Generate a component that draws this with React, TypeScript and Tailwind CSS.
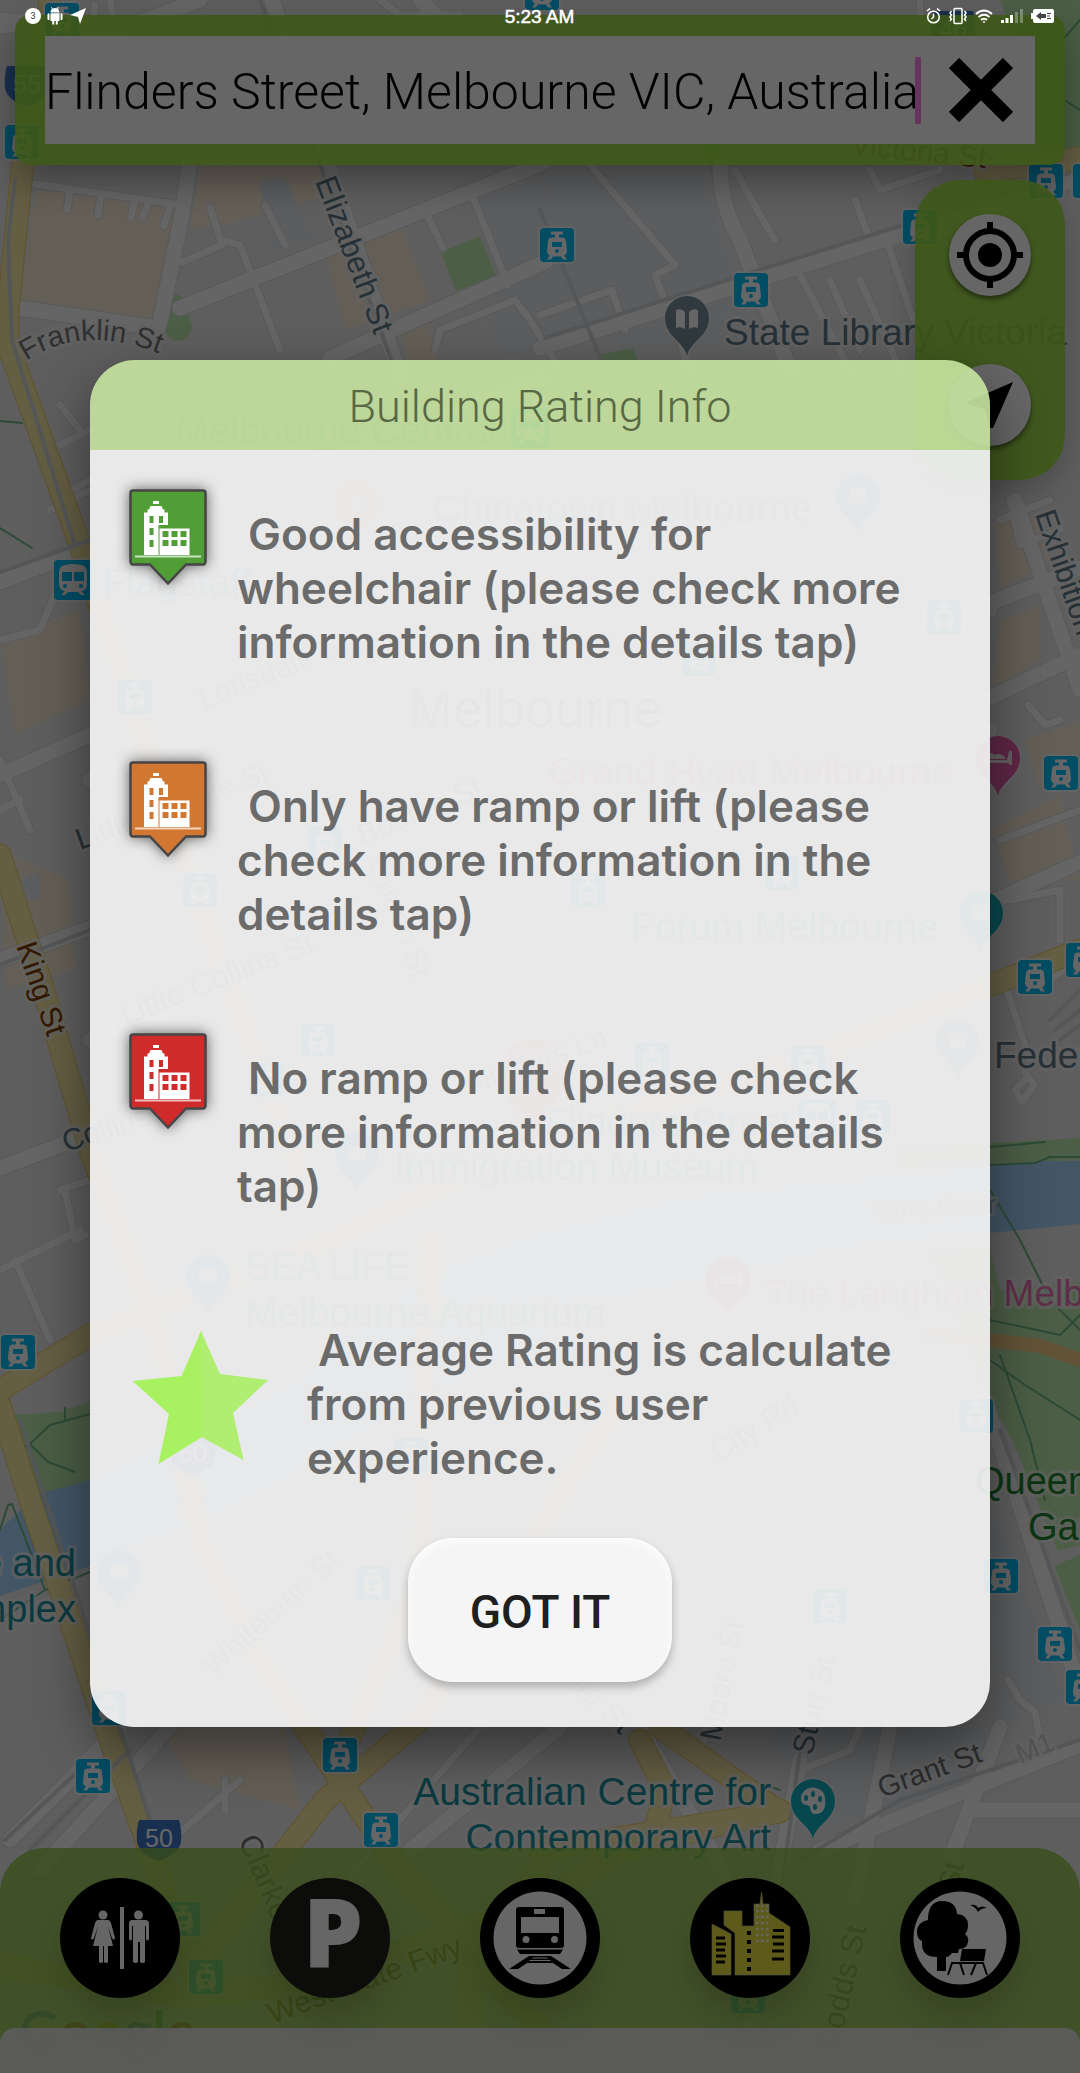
import React from "react";

type Point = [number, number];

const parks = [
  "M1000 0H1080V158L1045 150L1020 120L1015 40Z",
  "M441 252L480 236L496 277L456 291Z",
  "M169 300Q176 290 183 298L192 327Q188 341 177 341Q166 339 165 326Z",
  "M702 140H720L716 187Z",
  "M10 1415L60 1412L90 1401V1482L38 1494L22 1440Z",
  "M900 1148L1080 1138V1160L900 1168Z",
  "M930 1250L990 1248L1000 1290L1080 1282V1545L1058 1551L1012 1440L990 1400L950 1300Z",
  "M1054 1566L1080 1555V1630Z",
  "M600 355L632 348L640 366H600Z",
];

const warmBlocks = [
  "M36 190L182 208L166 290L155 320L20 302Z",
  "M200 165L300 150L345 190L225 225L190 230Z",
  "M325 250L400 222L430 300L345 330Z",
  "M400 330L425 310L440 370H410Z",
  "M0 640L80 610L90 700L15 735Z",
  "M0 850L70 880L75 970L5 990Z",
  "M995 520L1035 515L1050 560L1000 590Z",
  "M1000 620L1040 605L1040 660L992 690Z",
  "M1025 740L1080 720V770L1040 790Z",
  "M992 830L1060 795L1080 880L1010 880Z",
  "M160 1727H285L300 1810L190 1780Z",
  "M420 640L700 560L760 820L500 900Z",
  "M150 900L380 820L450 1040L220 1100Z",
  "M760 740L930 690L960 900L830 940Z",
];

const coolBlocks = [
  "M475 200L540 178L620 330L500 360Z",
  "M540 170H700L760 350H620Z",
  "M260 180L285 178L315 240L270 250Z",
  "M770 1727H985L1010 1790L800 1830Z",
  "M990 1500L1050 1660L1070 1700L995 1727Z",
  "M20 880L40 872V900H25Z",
];

const river =
  "M0 1530L30 1500L38 1494L90 1480L300 1380L430 1272L540 1232L690 1195L890 1175L990 1166L1040 1161H1080V1224L990 1233L860 1245L700 1282L600 1300L540 1340L400 1410L250 1500L90 1566L0 1596Z";

const wideRoads = [
  "M180 308L270 272L545 162",
  "M272 0L400 375",
  "M195 130L182 215L160 322",
  "M20 308L158 328",
  "M330 358L545 262",
  "M720 165Q720 205 740 240L790 370",
  "M540 348L740 285L910 232L1080 178",
  "M0 582L240 490L540 380",
  "M0 775L90 735",
  "M0 960L90 928",
  "M0 1168L90 1134",
  "M985 605L1080 568",
  "M985 700L1080 655",
  "M985 905L1080 862",
  "M1015 500L1080 690",
  "M985 1400L1080 1690",
  "M10 1840L60 1790L120 1727",
  "M40 1870L170 1727",
  "M750 2028L800 1760",
  "M820 1850L1080 1745",
  "M855 1900L890 1727",
  "M950 1860L1000 1727",
  "M970 1810H1080",
  "M640 1727L740 1900",
  "M410 1850L560 1727",
  "M90 780L560 600L990 440",
  "M90 930L540 765L990 610",
  "M90 1040L540 880L990 730",
  "M0 20L120 30L200 0",
  "M420 0L440 20",
  "M1045 980L1080 950",
];

const narrowRoads = [
  "M36 184L180 205",
  "M70 190L67 210M101 194L98 215M135 200L131 218M150 200L142 218M170 205L164 226",
  "M210 207L222 245L182 262M222 240L240 245L280 350",
  "M265 205L285 245",
  "M425 210L443 248",
  "M470 190L508 285",
  "M435 350L440 330L515 300L530 320L560 370",
  "M590 165L675 265L655 275L690 370M540 315L612 290L625 330",
  "M775 240L760 215L735 170",
  "M870 170L880 190L940 170",
  "M800 275L850 370M830 280L860 350M860 280L900 370",
  "M855 200L870 240M885 235L930 370",
  "M1010 500L1020 545L1060 530M1000 520L1050 500",
  "M1028 705L1045 725L1060 720",
  "M1000 840L1080 810M1010 900L1060 890L1060 940",
  "M1025 1080L1015 1090L1022 1102L1034 1085L1025 1072",
  "M1005 985L1030 1060",
  "M50 510L90 490M65 520L75 560M60 405L80 430M40 455L90 430M55 500L90 480",
  "M0 640L40 630L70 560M0 810L20 800M0 760L30 830",
  "M60 1190L90 1180M65 1190L75 1240L85 1235M0 1270L80 1230M15 1260L50 1340",
  "M225 1780V1810M160 1850L240 1780",
  "M1008 1680L1020 1700L1035 1712L1040 1740",
  "M700 1760L705 1730",
  "M860 1727L850 1750L800 1770",
  "M330 1900L480 1727",
  "M0 30L60 25M95 5L90 40M110 0L115 30",
  "M920 35V0M380 0L400 15H460",
];

const railLines = [
  "M260 0L395 370",
  "M540 210L605 370",
  "M0 572L90 540",
  "M15 180L8 240L12 340L75 545",
  "M545 338L740 276L1080 170",
  "M0 965L90 930",
  "M1000 1430L1080 1650",
  "M20 1420L150 1820",
  "M780 1900L800 1750",
  "M1050 1020L1080 990M1055 1030L1080 1010M1060 1040L1080 1025",
  "M30 1850L130 1750M5 1840L90 1760",
  "M800 1860L900 1800L1080 1740",
];

const majorRoads = [
  "M50 0L22 170L8 310L8 345L80 545L150 760L220 960L310 1200",
  "M0 855L42 985L90 1150L160 1340L200 1540L260 1660L400 1870L540 2028",
  "M0 1390L90 1335L330 1240L540 1140L800 1060L1080 950",
  "M0 1405L30 1500L110 1740L200 1990",
  "M620 1400L420 1720L325 1800L200 1960",
  "M0 1965L180 1995L300 1985L540 1905L620 1850L780 1810",
  "M660 1727L780 1812L540 1850",
  "M640 1740L665 1790L655 1830",
  "M540 1870L470 1960L470 2040",
  "M985 172L1080 158",
  "M430 1240L420 1580L340 1760",
];

const creekPaths = [
  "M0 528L32 548M0 421L22 423",
  "M22 1448L30 1444L50 1425L90 1414M30 1444L48 1462L75 1472M65 1408V1420",
  "M0 1530L8 1505L12 1504L45 1590L0 1620M45 1590L90 1572",
  "M990 1165L1035 1163L1050 1157L1080 1157M990 1147L1045 1142",
  "M990 1320L1060 1335L1080 1315M990 1360L1025 1385L1080 1420M1000 1355L1030 1440L1045 1500",
  "M990 1190L1020 1240L1050 1300L1080 1330",
  "M650 1727L700 1765L780 1790",
  "M1000 60L1080 110M1080 20L1010 100",
];

const tramStops: Point[] = [
  [557, 245], [751, 290], [1046, 181], [920, 227], [22, 142], [1090, 181], [62, 20], [542, -7],
  [135, 697], [944, 617], [699, 659], [1061, 773], [588, 890], [782, 873], [200, 890], [325, 843],
  [318, 1040], [267, 1080], [652, 1060], [808, 1063], [873, 1117], [1035, 977], [1083, 960],
  [18, 1352], [411, 1455], [976, 1416], [1001, 1576], [1055, 1644], [1083, 1687], [373, 1583],
  [830, 1606], [109, 1708], [340, 1755], [93, 1776], [381, 1830], [183, 1919], [206, 1977], [748, 1996],
];

const trainStations: Point[] = [[73, 580], [530, 428], [817, 1119]];

const pins: { at: Point; fill: string }[] = [
  { at: [357, 505], fill: "#ff9e67" },
  { at: [858, 497], fill: "#4fb4dc" },
  { at: [981, 914], fill: "#12b5c3" },
  { at: [958, 1042], fill: "#78909c" },
  { at: [357, 1155], fill: "#4fb4dc" },
  { at: [208, 1277], fill: "#4fb4dc" },
  { at: [119, 1573], fill: "#4fb4dc" },
];

const hotels: Point[] = [[998, 759], [728, 1280]];

const slate = "#5f7b8a";
const teal = "#1c91a0";
const pink = "#f070b8";
const street = "#77808a";

const labels: { text: string; x: number; y: number; r?: number; size?: number; fill: string; end?: boolean }[] = [
  { text: "State Library Victoria", x: 724, y: 345, size: 37, fill: slate },
  { text: "Elizabeth St", x: 315, y: 181, r: 69, size: 31, fill: slate },
  { text: "Victoria St", x: 850, y: 154, r: 6, size: 30, fill: "#a0401a" },
  { text: "King St", x: 16, y: 946, r: 71, size: 30, fill: "#803f00" },
  { text: "Collins St", x: 66, y: 1152, r: -18, size: 30, fill: slate },
  { text: "Little Bourke St", x: 80, y: 850, r: -20, size: 30, fill: slate },
  { text: "Lonsdale St", x: 203, y: 710, r: -22, size: 30, fill: street },
  { text: "Little Collins St", x: 125, y: 1025, r: -21, size: 31, fill: street },
  { text: "Bourke St", x: 362, y: 845, r: -22, size: 30, fill: street },
  { text: "Queen St", x: 368, y: 862, r: 69, size: 30, fill: street },
  { text: "Flinders Ln", x: 470, y: 1096, r: -20, size: 30, fill: street },
  { text: "City Rd", x: 718, y: 1463, r: -32, size: 30, fill: "#b07060" },
  { text: "Whiteman St", x: 214, y: 1678, r: -42, size: 30, fill: street },
  { text: "Power St", x: 530, y: 1654, r: 42, size: 30, fill: slate },
  { text: "Moore St", x: 720, y: 1742, r: -79, size: 30, fill: slate },
  { text: "Sturt St", x: 812, y: 1756, r: -77, size: 30, fill: slate },
  { text: "Grant St", x: 882, y: 1798, r: -20, size: 29, fill: "#6f7275" },
  { text: "M1", x: 1020, y: 1764, r: -22, size: 28, fill: "#cfcfcf" },
  { text: "Clarke St", x: 238, y: 1840, r: 67, size: 31, fill: "#6f7275" },
  { text: "West Gate Fwy", x: 272, y: 2024, r: -20, size: 30, fill: "#804a00" },
  { text: "Dodds St", x: 838, y: 2052, r: -77, size: 31, fill: "#6f7275" },
  { text: "St", x: 958, y: 1892, r: -77, size: 30, fill: "#6f7275" },
  { text: "Exhibition St", x: 1035, y: 514, r: 71, size: 30, fill: slate },
  { text: "Federation Square", x: 994, y: 1068, size: 37, fill: slate },
  { text: "The Langham Melbourne", x: 765, y: 1306, size: 37, fill: pink },
  { text: "Queen Victoria", x: 975, y: 1494, size: 38, fill: "#20842d" },
  { text: "Gardens", x: 1028, y: 1540, size: 38, fill: "#20842d" },
  { text: "Theatre and", x: 76, y: 1576, size: 38, fill: teal, end: true },
  { text: "Complex", x: 76, y: 1622, size: 38, fill: teal, end: true },
  { text: "Australian Centre for", x: 771, y: 1805, size: 39, fill: teal, end: true },
  { text: "Contemporary Art", x: 771, y: 1851, size: 39, fill: teal, end: true },
  { text: "Melbourne Central", x: 176, y: 444, size: 39, fill: "#5fb8b8" },
  { text: "Flagstaff", x: 102, y: 596, size: 39, fill: "#40aee0" },
  { text: "Chinatown Melbourne", x: 433, y: 522, size: 39, fill: "#70a8c0" },
  { text: "Melbourne", x: 408, y: 727, size: 54, fill: "#888888" },
  { text: "Grand Hyatt Melbourne", x: 548, y: 785, size: 39, fill: pink },
  { text: "Forum Melbourne", x: 631, y: 940, size: 39, fill: "#48a8b8" },
  { text: "Flinders Street", x: 545, y: 1136, size: 38, fill: "#48b0d8" },
  { text: "Immigration Museum", x: 394, y: 1180, size: 39, fill: "#50a8b8" },
  { text: "SEA LIFE", x: 245, y: 1280, size: 38, fill: "#50a8c0" },
  { text: "Melbourne Aquarium", x: 245, y: 1326, size: 39, fill: "#50a8c0" },
  { text: "Yarra River", x: 872, y: 1221, r: -4, size: 25, fill: "#8fb0d8" },
];

function Tram({ at }: { at: Point }) {
  return (
    <g transform={`translate(${at[0] - 17} ${at[1] - 17})`}>
      <rect x="-2" y="-2" width="38" height="38" rx="6" fill="#fff" fillOpacity=".7" />
      <rect width="34" height="34" rx="4" fill="#04c0fa" />
      <path fill="#fff" d="M11 3.500h12v3h-4v3h3q4 0 4 4l1 9q0 4-3 5l3 4h-4l-2-3h-8l-2 3H7l3-4q-3-1-3-5l1-9q0-4 4-4h3v-3h-4z" />
      <path fill="#04c0fa" d="M12 14h10v5H12z" />
      <circle cx="17" cy="23" r="2" fill="#04c0fa" />
    </g>
  );
}

function Train({ at }: { at: Point }) {
  return (
    <g transform={`translate(${at[0] - 19} ${at[1] - 20})`}>
      <rect x="-2" y="-2" width="42" height="44" rx="6" fill="#fff" fillOpacity=".7" />
      <rect width="38" height="40" rx="4" fill="#04c0fa" />
      <path fill="#fff" d="M11 5q8-2 16 0q6 1 6 7v12q0 6-6 7l4 4h-4l-3-3H14l-3 3H7l4-4q-6-1-6-7V12q0-6 6-7z" />
      <path fill="#04c0fa" d="M8 12h10v9H8zM20 12h10v9H20z" />
      <circle cx="11" cy="26" r="2" fill="#04c0fa" />
      <circle cx="27" cy="26" r="2" fill="#04c0fa" />
    </g>
  );
}

function Pin({ at, fill, children }: { at: Point; fill: string; children?: React.ReactNode }) {
  return (
    <g transform={`translate(${at[0]} ${at[1]})`}>
      <path d="M0 37C-3 22-22 18-22-1A22 22 0 0 1 22-1C22 18 3 22 0 37Z" fill={fill} stroke="#fff" strokeOpacity=".6" strokeWidth="3" paintOrder="stroke" />
      {children ?? <rect x="-9" y="-9" width="18" height="15" rx="3" fill="#fff" fillOpacity=".8" />}
    </g>
  );
}

function Shield({ x, y, text }: { x: number; y: number; text: string }) {
  return (
    <g transform={`translate(${x} ${y})`}>
      <path d="M-20-20H20Q23-10 22 2Q20 14 0 21Q-20 14-22 2Q-23-10-20-20Z" fill="#3f76c8" />
      <text y="7" textAnchor="middle" fontSize="25" fill="#fff">{text}</text>
    </g>
  );
}

function CityMap() {
  return (
    <svg aria-hidden="true" viewBox="0 0 1080 2073" preserveAspectRatio="xMidYMid slice" className="absolute inset-0 h-full w-full bg-[#ebebeb] font-['Liberation_Sans',Arial,sans-serif]">
      {warmBlocks.map((d) => <path key={d} d={d} fill="#fbeed8" />)}
      {coolBlocks.map((d) => <path key={d} d={d} fill="#e3e8ee" />)}
      {parks.map((d) => <path key={d} d={d} fill="#bdebae" />)}
      <path d={river} fill="#a8d6ff" />
      <g fill="none" strokeLinecap="round" strokeLinejoin="round">
        <g stroke="#dcdcdc">
          {narrowRoads.map((d) => <path key={d} d={d} strokeWidth="9" />)}
          {wideRoads.map((d) => <path key={d} d={d} strokeWidth="17" />)}
        </g>
        <g stroke="#fcfcfc">
          {narrowRoads.map((d) => <path key={d} d={d} strokeWidth="7" />)}
          {wideRoads.map((d) => <path key={d} d={d} strokeWidth="15" />)}
        </g>
        {creekPaths.map((d) => <path key={d} d={d} stroke="#6fb98a" strokeWidth="2" />)}
        {majorRoads.map((d) => <path key={d} d={d} stroke="#f0cd6c" strokeWidth="23" />)}
        {majorRoads.map((d) => <path key={d} d={d} stroke="#fbeaa8" strokeWidth="21" />)}
        {railLines.map((d) => <path key={d} d={d} stroke="#d3d7d9" strokeWidth="4" />)}
        <path d="M930 1334L990 1340L1040 1346L1080 1360" stroke="#f5cf8a" strokeWidth="14" />
      </g>
      <Shield x={27} y={86} text="55" />
      <Shield x={159} y={1840} text="50" />
      <Shield x={193} y={1455} text="60" />
      <Shield x={953} y={31} text="46" />
      {tramStops.map((at) => <Tram key={at.join()} at={at} />)}
      {trainStations.map((at) => <Train key={at.join()} at={at} />)}
      {pins.map((pin) => <Pin key={pin.at.join()} at={pin.at} fill={pin.fill} />)}
      {hotels.map((at) => (
        <Pin key={at.join()} at={at} fill="#ee61ae">
          <path d="M-13-6h2v7h20l2-9h3v14h-3V4h-22v3h-2zM-8 0a3 3 0 1 1 4-4q8-3 12 4z" fill="#fff" fillOpacity=".9" />
        </Pin>
      ))}
      <Pin at={[687, 319]} fill="#78909c">
        <path d="M-11-9q6-2 9 2v17q-4-3-9-1zM11-9q-6-2-9 2v17q4-3 9-1z" fill="#fff" />
      </Pin>
      <Pin at={[813, 1802]} fill="#12b5c3">
        <path d="M-12-3A12 11 0 0 1 12-4Q14 12 2 12Q-2 12-3 6Q-3 3-7 3Q-12 2-12-3Z" fill="#fff" />
        <g fill="#12b5c3">
          <ellipse cx="-7" cy="-4" rx="2" ry="3" />
          <ellipse cx="0" cy="-8" rx="2" ry="3" />
          <ellipse cx="7" cy="-3" rx="2" ry="3" />
          <ellipse cx="2" cy="5" rx="2" ry="3" />
        </g>
      </Pin>
      <path d="M533 1153C529 1120 500 1100 500 1066A35 35 0 0 1 568 1066C568 1100 537 1120 533 1153Z" fill="#ff7a70" />
      <g stroke="#f6f6f6" strokeOpacity=".7" strokeWidth="6" strokeLinejoin="round" paintOrder="stroke">
        {labels.map((l) => (
          <text key={`${l.text}${l.x}`} transform={`translate(${l.x} ${l.y}) rotate(${l.r ?? 0})`} fontSize={l.size} fill={l.fill} textAnchor={l.end ? "end" : "start"}>
            {l.text}
          </text>
        ))}
        <path id="franklin" d="M26 361Q85 322 165 356" fill="none" stroke="none" />
        <text fontSize="29" fill="#77797b"><textPath href="#franklin">Franklin St</textPath></text>
      </g>
      <text x="0" y="2085" fontSize="44" fill="#a8a8a8">Southbank</text>
      <text x="19" y="2051" fontSize="56" className="font-[Lato,sans-serif] font-semibold">
        <tspan fill="#4285f4">G</tspan><tspan fill="#ea4335">o</tspan><tspan fill="#fbbc05">o</tspan><tspan fill="#4285f4">g</tspan><tspan fill="#34a853">l</tspan><tspan fill="#ea4335">e</tspan>
      </text>
    </svg>
  );
}

function StatusBar() {
  return (
    <div className="absolute inset-x-0 top-0 z-20 grid h-8 grid-cols-3 items-center pr-[26px] pl-[25px] text-white">
      <div className="flex items-center gap-[6px]">
        <svg width="16" height="16" viewBox="0 0 16 16" aria-hidden="true">
          <circle cx="8" cy="8" r="8" fill="#fff" />
          <text x="8" y="11" textAnchor="middle" fontSize="9" fill="#333" className="font-[Roboto,sans-serif]">3</text>
        </svg>
        <svg width="16" height="18" viewBox="0 0 16 18" fill="#fff" aria-hidden="true">
          <path d="M3.500 5.500A4.500 4.500 0 0 1 5 2L4 .5 4.500 0l1.300 1.500a5 5 0 0 1 4.400 0L11.500 0l.5.500L11 2a4.500 4.500 0 0 1 1.500 3.500zM3.500 6.300h9V14h-1.700v3.500H8.800V14H7.200v3.500H5.200V14H3.500zM.5 7q1-1.300 2 0v5.500q-1 1.200-2 0zM13.500 7q1-1.300 2 0v5.500q-1 1.200-2 0z" />
        </svg>
        <svg width="18" height="18" viewBox="0 0 18 18" fill="#fff" aria-hidden="true"><path d="M17 1L1 8l8 2 2 7z" /></svg>
      </div>
      <time className="text-center font-['Liberation_Sans',Arial,sans-serif] text-[19px] leading-none [-webkit-text-stroke:0.5px_white]">5:23 AM</time>
      <div className="flex items-center justify-end gap-[8px]">
        <svg width="15" height="18" viewBox="0 0 15 18" fill="none" stroke="#fff" strokeWidth="1.500" aria-hidden="true">
          <circle cx="7.500" cy="10" r="5.800" /><path d="M7.500 6.500V10L5.500 12M1 4l3-2.500M14 4l-3-2.500" />
        </svg>
        <svg width="18" height="18" viewBox="0 0 18 18" fill="none" stroke="#fff" strokeWidth="1.500" aria-hidden="true">
          <rect x="5" y="1.500" width="8" height="15" rx="1" /><path d="M2.500 4l-1.500 2 1.500 2-1.500 2 1.500 2-1.500 2M15.500 4l1.500 2-1.500 2 1.500 2-1.500 2 1.500 2" />
        </svg>
        <svg width="18" height="18" viewBox="0 0 18 18" fill="none" stroke="#fff" strokeWidth="1.800" aria-hidden="true">
          <path d="M1 7q8-7 16 0M3.500 10q5.500-4.500 11 0M6 13q3-2.500 6 0" /><circle cx="9" cy="15" r="1" fill="#fff" stroke="none" />
        </svg>
        <svg width="22" height="16" viewBox="0 0 22 16" fill="#fff" aria-hidden="true">
          <path d="M0 12h3v3H0zM4.500 10h3v5h-3zM9 7h3v8H9z" /><path opacity=".3" d="M14 4h3v11h-3zM19 1h3v14h-3z" />
        </svg>
        <svg width="23" height="14" viewBox="0 0 23 14" aria-hidden="true">
          <path fill="#fff" d="M4 0h17q2 0 2 2v10q0 2-2 2H4q-2 0-2-2v-2H0V4h2V2q0-2 2-2z" />
          <path fill="#444" d="M5 7l5-4v2h5v4h-5v2zM16 4h4v1h-4zM16 9h4v1h-4zM16 6.500h3v1h-3z" />
        </svg>
      </div>
    </div>
  );
}

function ToiletIcon() {
  return (
    <svg viewBox="0 0 120 120" className="h-full w-full" aria-hidden="true">
      <circle cx="60" cy="60" r="60" />
      <g fill="#fff">
        <rect x="60" y="29" width="4" height="62" />
        <circle cx="43" cy="37" r="4.500" />
        <path d="M38 42h10q2 0 3 3l4 15q-1 3-3 0l-4-12 5 20h-5v16q-2 2-4 0V68h-1v16q-2 2-4 0V68h-6l5-20-4 12q-2 3-3 0l4-15q1-3 3-3z" />
        <circle cx="78.500" cy="37" r="4.500" />
        <path d="M72 42h13q4 0 4 4v15q-1.500 3-3 0V48h-1v36q-2.500 2-5 0V64h-2v20q-2.500 2-5 0V48h-1v13q-1.500 3-3 0V46q0-4 3-4z" />
      </g>
    </svg>
  );
}

function ParkingIcon() {
  return (
    <svg viewBox="0 0 120 120" className="h-full w-full" aria-hidden="true">
      <circle cx="60" cy="60" r="60" fill="#1e1e1b" />
      <text x="33" y="90" fontSize="95" fill="#fff" className="font-['Open_Sans',sans-serif] font-extrabold">P</text>
    </svg>
  );
}

function TransitIcon() {
  return (
    <svg viewBox="0 0 120 120" className="h-full w-full" aria-hidden="true">
      <circle cx="60" cy="60" r="60" />
      <circle cx="60" cy="60" r="46.500" fill="#fff" />
      <path d="M39 29h42q3 0 3 3v35q0 3-3 3H39q-3 0-3-3V32q0-3 3-3z" />
      <path d="M37 71.500h46l-3 4.500H40z" />
      <path d="M49 78h22l20 13h-9l-9-6H47l-9 6h-9z" />
      <path fill="#fff" d="M54 31h11v5H54zM41 39h38v16H41zM53 79.500h14l1 1H52zM50 82h20l1 1H49z" />
      <circle cx="46" cy="61.500" r="3.500" fill="#fff" />
      <circle cx="74.500" cy="61.500" r="3.500" fill="#fff" />
    </svg>
  );
}

function SkylineIcon() {
  const tower = [28, 33, 39, 45, 51, 57, 63];
  return (
    <svg viewBox="0 0 120 120" className="h-full w-full" aria-hidden="true">
      <circle cx="60" cy="60" r="60" />
      <path fill="#ebe141" stroke="#c8c8a0" strokeWidth=".7" d="M22 46l19 10v41H22zM45 97V55L34 47V33h18v15h12V26h6l1.500-12L73 26h6v9l21 14v48z" />
      <path stroke="#000" strokeWidth="2.800" d="M26 60h9M26 66h10M26 72h9M26 78h10M26 84h9M83 52.500h11M82 59h12M83 66h11M82 73h12M82 81h12" />
      <path stroke="#000" strokeWidth="4" strokeDasharray="4 5" d="M59 53v40" />
      {tower.map((y) => <path key={y} stroke="#fff" strokeWidth="2.500" strokeDasharray="2.500 2.500" d={`M66 ${y}h13`} />)}
    </svg>
  );
}

function ParkIcon() {
  return (
    <svg viewBox="0 0 120 120" className="h-full w-full" aria-hidden="true">
      <circle cx="60" cy="60" r="60" />
      <circle cx="60" cy="60" r="46.500" fill="#fff" />
      <path d="M28 42q0-19 14-19t15 13q11 1 11 11 0 6-3 9 4 3 3 8-1 7-9 7l-1 4h-6q-3 4-6 4v14h-9V79q-15 0-15-13v-3q-5-2-5-9 0-10 11-12z" />
      <path d="M70 27q6-1 8 3 4-3 9 0-6 0-9 4-2-5-8-7z" />
      <path d="M62 71h24l-2 12H60z" />
      <path fill="none" stroke="#000" strokeWidth="2" d="M48 97l4-12h31l4 12M60 85l4 12M76 85l-5 12" />
    </svg>
  );
}

const places = [
  { name: "Toilets", Icon: ToiletIcon },
  { name: "Parking", Icon: ParkingIcon },
  { name: "Public transport", Icon: TransitIcon },
  { name: "Buildings", Icon: SkylineIcon },
  { name: "Parks", Icon: ParkIcon },
];

function BuildingMarker({ fill }: { fill: string }) {
  return (
    <svg viewBox="0 0 96 111" className="h-[111px] w-24 shrink-0 drop-shadow-[0_0_7px_rgba(0,0,0,0.6)]" aria-hidden="true">
      <path d="M13 10.500h70q2.500 0 2.500 2.500v68q0 3.500-2.500 3.500H66L48 103.500 30 84.500H13q-2.500 0-2.500-3.500V13q0-2.500 2.500-2.500z" fill={fill} stroke="#454545" strokeWidth="2.500" />
      <path fill="#fff" d="M33 21h6v3h-6zM30.500 26h11l1.500 3.500h1.500v3H48V45H38.500v30H24V32.500h3.500v-3H29zM39.500 48.500h30V75h-30z" />
      <path fill="#fff" fillOpacity=".7" d="M15 75.500h66v2H15z" />
      <path fill={fill} d="M29.500 36h4v7h-4zM39 36h4v7h-4zM29.500 48h4v7h-4zM29.500 60h4v7h-4zM42.500 51h6v6h-6zM51.500 51h6v6h-6zM60.500 51h6v6h-6zM42.500 60h6v6h-6zM51.500 60h6v6h-6zM60.500 60h6v6h-6z" />
    </svg>
  );
}

function StarIcon() {
  return (
    <svg viewBox="0 0 166 166" className="mt-[18px] size-[166px] shrink-0" aria-hidden="true">
      <path fill="#a8f160" d="M81 17L61.500 62 12.600 67 49 100 38.500 150 82 123V18z" />
      <path fill="#afee70" d="M81 17L100 60 148 66 113 99 123.500 146 81.500 123z" />
    </svg>
  );
}

const ratings = [
  { text: "Good accessibility for wheelchair (please check more information in the details tap)", icon: <BuildingMarker fill="#519e36" /> },
  { text: "Only have ramp or lift (please check more information in the details tap)", icon: <BuildingMarker fill="#d27731" /> },
  { text: "No ramp or lift (please check more information in the details tap)", icon: <BuildingMarker fill="#d12a2b" /> },
  { text: "Average Rating is calculate from previous user experience.", icon: <StarIcon /> },
];

function RatingDialog() {
  return (
    <div className="absolute inset-0 z-10 flex items-center justify-center bg-black/60 px-[90px] pt-[14px]">
      <section role="dialog" aria-modal="true" aria-labelledby="rating-title" className="w-full max-w-[900px] overflow-hidden rounded-[45px] shadow-[0_22px_55px_rgba(0,0,0,0.45)]">
        <header className="flex h-[90px] items-center justify-center bg-[#c4e29e]/92 pt-1">
          <h2 id="rating-title" className="font-[Roboto,sans-serif] text-[45px] leading-[60px] font-light text-[#586844]">Building Rating Info</h2>
        </header>
        <div className="flex flex-col items-center bg-[#f5f5f5]/92 pt-[30px] pb-[45px]">
          <ul className="flex w-full flex-col gap-[83px] pr-[60px] pl-[30px]">
            {ratings.map((rating) => (
              <li key={rating.text} className="flex items-start gap-[21px]">
                {rating.icon}
                <p className="pt-[27px] font-[Inter,sans-serif] text-[44px] leading-[54px] font-semibold text-[#6a6b6a]">{"\u00a0" + rating.text}</p>
              </li>
            ))}
          </ul>
          <button type="button" className="mt-[53px] h-[144px] w-[264px] rounded-[45px] bg-[#f5f5f5] pt-1 font-[Roboto,sans-serif] text-[46px] font-medium text-[#202020] shadow-[0_5px_9px_rgba(0,0,0,0.25),inset_0_4px_8px_rgba(255,255,255,0.8)]">GOT IT</button>
        </div>
      </section>
    </div>
  );
}

export default function App() {
  return (
    <div className="relative flex min-h-screen flex-col overflow-hidden">
      <CityMap />
      <StatusBar />
      <header className="relative m-[15px] rounded-[15px] bg-[#98d93c]/90 px-[30px] py-[21px] shadow-[0_16px_36px_rgba(0,0,0,0.35)]">
        <div className="flex h-[108px] items-center bg-white">
          <input aria-label="Search address" defaultValue="Flinders Street, Melbourne VIC, Australia" className="min-w-0 flex-1 bg-transparent pt-1 font-[Roboto,sans-serif] text-[50px] leading-[60px] font-light text-black outline-none" />
          <span className="h-[67px] w-[6px] bg-[#fc85f0]" />
          <button type="button" aria-label="Clear search" className="mr-[22px] ml-[28px]">
            <svg width="64" height="64" viewBox="0 0 64 64" aria-hidden="true"><path d="M5 5L59 59M59 5L5 59" stroke="#000" strokeWidth="14.500" /></svg>
          </button>
        </div>
      </header>
      <main className="relative flex flex-1 flex-col items-end pr-[15px]">
        <div className="flex h-[300px] w-[150px] flex-col items-center justify-between rounded-[45px] bg-[#98d93c]/90 py-[34px] shadow-[0_12px_30px_rgba(0,0,0,0.2)]">
          <button type="button" aria-label="My location" className="size-[82px] rounded-full bg-white shadow-[0_3px_5px_rgba(0,0,0,0.5)]">
            <svg viewBox="0 0 82 82" aria-hidden="true">
              <circle cx="41" cy="41" r="24" fill="none" stroke="#000" strokeWidth="6" />
              <circle cx="41" cy="41" r="12" />
              <path d="M41 8v12M41 62v12M8 41h12M62 41h12" stroke="#000" strokeWidth="6" />
            </svg>
          </button>
          <button type="button" aria-label="Navigate" className="size-[82px] rounded-full bg-white shadow-[0_3px_5px_rgba(0,0,0,0.5)]">
            <svg viewBox="0 0 82 82" aria-hidden="true"><path d="M64 18L44 64H41L36 45L18 40V38Z" /></svg>
          </button>
        </div>
      </main>
      <nav aria-label="Places" className="relative rounded-t-[45px] bg-[#8fc243]/80">
        <ul className="flex h-[180px] items-center justify-between px-[60px]">
          {places.map(({ name, Icon }) => (
            <li key={name}>
              <button type="button" aria-label={name} className="block size-[120px] rounded-full shadow-[0_20px_30px_rgba(0,0,0,0.15)]"><Icon /></button>
            </li>
          ))}
        </ul>
        <div className="h-[45px] rounded-t-[15px] bg-[#e4e4e0]/95" />
      </nav>
      <RatingDialog />
    </div>
  );
}
